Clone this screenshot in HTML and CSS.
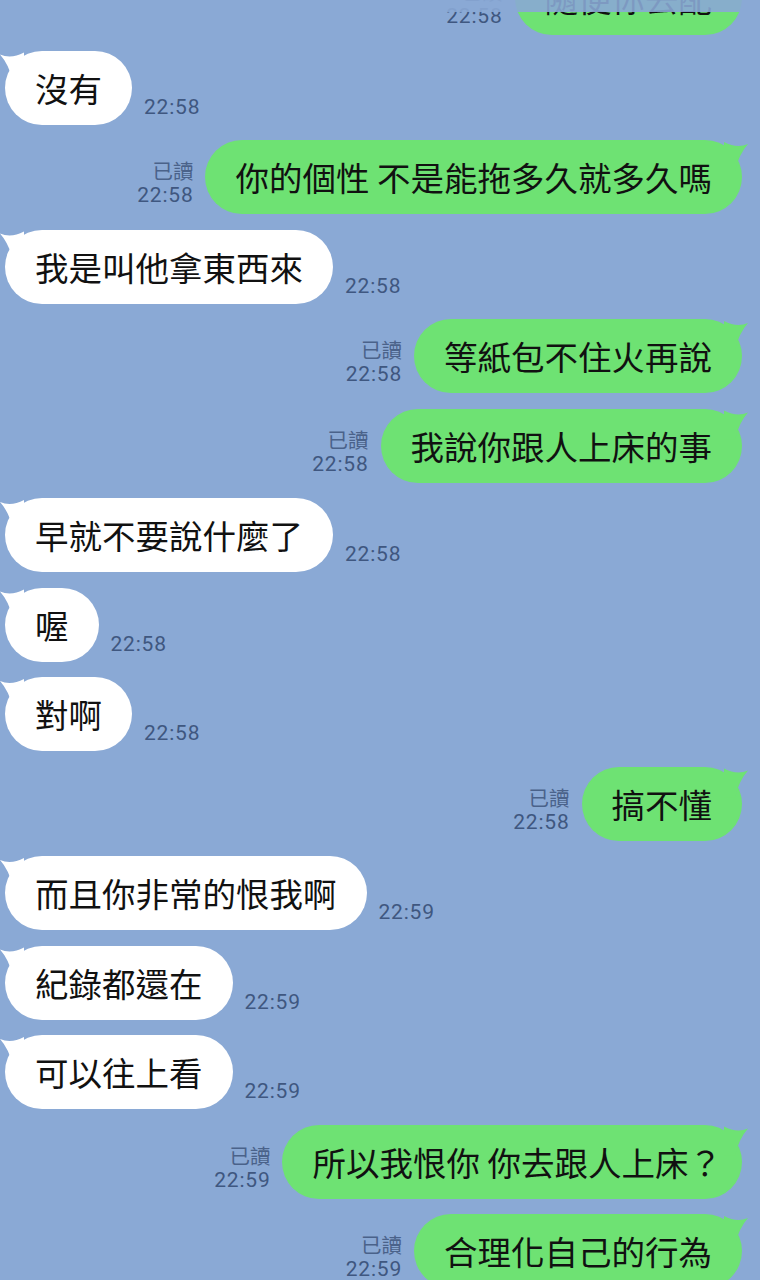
FILE: index.html
```html
<!DOCTYPE html>
<html lang="zh-Hant">
<head>
    <meta charset="UTF-8">
    <meta name="viewport" content="width=device-width, initial-scale=1.0">
    <title>聊天</title>
    <link rel="stylesheet" href="styles.css">
</head>
<body>
    <div class="fade"></div>
    <div class="chat">
        <div class="row me first">
            <div class="meta"><span class="read">已讀</span><span class="time">22:58</span></div>
            <div class="bubble">隨便你去配</div>
        </div>

        <div class="row other">
            <div class="bubble">沒有</div>
            <div class="meta"><span class="time">22:58</span></div>
        </div>

        <div class="row me">
            <div class="meta"><span class="read">已讀</span><span class="time">22:58</span></div>
            <div class="bubble">你的個性 不是能拖多久就多久嗎</div>
        </div>

        <div class="row other">
            <div class="bubble">我是叫他拿東西來</div>
            <div class="meta"><span class="time">22:58</span></div>
        </div>

        <div class="row me">
            <div class="meta"><span class="read">已讀</span><span class="time">22:58</span></div>
            <div class="bubble">等紙包不住火再說</div>
        </div>

        <div class="row me">
            <div class="meta"><span class="read">已讀</span><span class="time">22:58</span></div>
            <div class="bubble">我說你跟人上床的事</div>
        </div>

        <div class="row other">
            <div class="bubble">早就不要說什麼了</div>
            <div class="meta"><span class="time">22:58</span></div>
        </div>

        <div class="row other">
            <div class="bubble">喔</div>
            <div class="meta"><span class="time">22:58</span></div>
        </div>

        <div class="row other">
            <div class="bubble">對啊</div>
            <div class="meta"><span class="time">22:58</span></div>
        </div>

        <div class="row me">
            <div class="meta"><span class="read">已讀</span><span class="time">22:58</span></div>
            <div class="bubble">搞不懂</div>
        </div>

        <div class="row other">
            <div class="bubble">而且你非常的恨我啊</div>
            <div class="meta"><span class="time">22:59</span></div>
        </div>

        <div class="row other">
            <div class="bubble">紀錄都還在</div>
            <div class="meta"><span class="time">22:59</span></div>
        </div>

        <div class="row other">
            <div class="bubble">可以往上看</div>
            <div class="meta"><span class="time">22:59</span></div>
        </div>

        <div class="row me">
            <div class="meta"><span class="read">已讀</span><span class="time">22:59</span></div>
            <div class="bubble">所以我恨你 你去跟人上床<span class="q">？</span></div>
        </div>

        <div class="row me">
            <div class="meta"><span class="read">已讀</span><span class="time">22:59</span></div>
            <div class="bubble">合理化自己的行為</div>
        </div>
    </div>
</body>
</html>
```

FILE: styles.css
```css
* {
box-sizing: border-box;
margin: 0;
padding: 0;
}

body {
background: #8aa9d5;
width: 760px;
height: 1280px;
overflow: hidden;
font-family: "Noto Sans CJK TC", "Noto Sans CJK SC", sans-serif;
}

/* faded strip over the top edge of the screenshot */
.fade {
position: absolute;
top: 0;
left: 0;
width: 760px;
height: 12px;
background: rgba(138, 169, 213, 0.9);
z-index: 2;
}

.chat {
display: flex;
flex-direction: column;
gap: 15.5px;
padding: 0 18px 0 5px;
}

.row {
display: flex;
align-items: flex-end;
gap: 12px;
}

.row.me {
justify-content: flex-end;
}

.row.first {
margin-top: -39px;
}

.bubble {
position: relative;
height: 74px;
padding: 18px 30px;
line-height: 38px;
font-size: 33.5px;
color: #111;
border-radius: 37px;
white-space: nowrap;
}

.bubble .q {
letter-spacing: -10px;
}

.other .bubble {
background: #fff;
}

.me .bubble {
background: #6ee273;
}

/* tails */
.bubble::before {
content: "";
position: absolute;
top: 1px;
width: 30px;
height: 30px;
background: inherit;
}

.other .bubble::before {
left: -5px;
clip-path: path("M0 3 Q11 8 24 1 L24 30 L13 30 Q9 13 0 3 Z");
}

.me .bubble::before {
right: -6px;
clip-path: path("M30 3 Q19 8 6 1 L6 30 L17 30 Q21 13 30 3 Z");
}

.meta {
display: flex;
flex-direction: column;
padding-bottom: 5px;
font-family: "Roboto", "Noto Sans CJK TC", sans-serif;
color: #3f5780;
line-height: 25px;
}

.me .meta {
align-items: flex-end;
padding-bottom: 6px;
}

.read {
font-family: "Noto Sans CJK TC", sans-serif;
font-size: 20.5px;
color: #4a628a;
}

.time {
font-size: 21px;
letter-spacing: 0.8px;
}
```
